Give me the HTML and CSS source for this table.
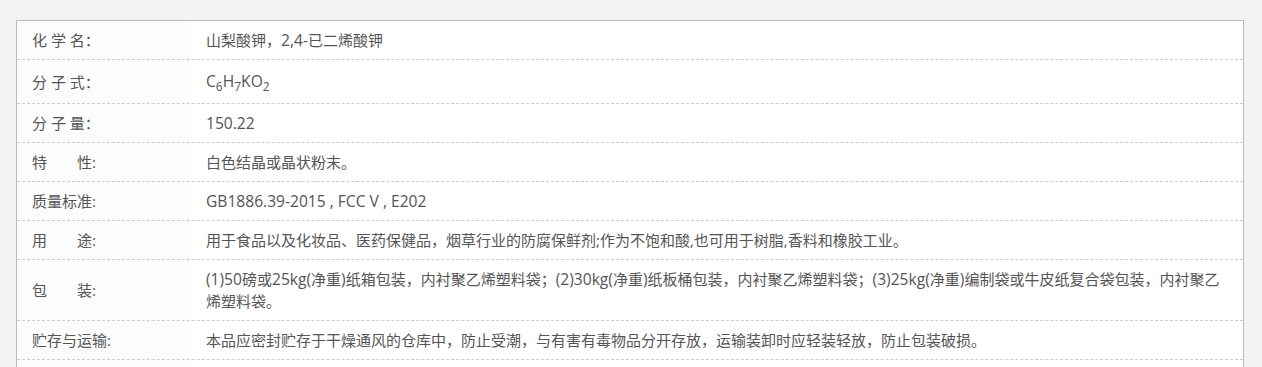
FILE: index.html
```html
<!DOCTYPE html>
<html lang="zh-CN">
<head>
<meta charset="utf-8">
<title>山梨酸钾</title>
<link rel="stylesheet" href="styles.css">
</head>
<body>
<div class="spec">
  <div class="row"><div class="label">化 学 名：</div><div class="value">山梨酸钾，<span class="en">2,4-</span>已二烯酸钾</div></div>
  <div class="row"><div class="label">分 子 式：</div><div class="value formula"><span class="en">C<sub>6</sub>H<sub>7</sub>KO<sub>2</sub></span></div></div>
  <div class="row"><div class="label">分 子 量：</div><div class="value"><span class="en">150.22</span></div></div>
  <div class="row"><div class="label">特　　性:</div><div class="value">白色结晶或晶状粉末。</div></div>
  <div class="row"><div class="label">质量标准:</div><div class="value"><span class="en">GB1886.39-2015 , FCC V , E202</span></div></div>
  <div class="row"><div class="label">用　　途:</div><div class="value">用于食品以及化妆品、医药保健品，烟草行业的防腐保鲜剂;作为不饱和酸,也可用于树脂,香料和橡胶工业。</div></div>
  <div class="row"><div class="label">包　　装:</div><div class="value"><span><span class="en">(1)50</span>磅或<span class="en">25kg(</span>净重<span class="en">)</span>纸箱包装，内衬聚乙烯塑料袋；<span class="en">(2)30kg(</span>净重<span class="en">)</span>纸板桶包装，内衬聚乙烯塑料袋；<span class="en">(3)25kg(</span>净重<span class="en">)</span>编制袋或牛皮纸复合袋包装，内衬聚乙烯塑料袋。</span></div></div>
  <div class="row"><div class="label">贮存与运输:</div><div class="value">本品应密封贮存于干燥通风的仓库中，防止受潮，与有害有毒物品分开存放，运输装卸时应轻装轻放，防止包装破损。</div></div>
  <div class="row"><div class="label"></div><div class="value"></div></div>
</div>
</body>
</html>
```
FILE: styles.css
```css
html, body {
  margin: 0;
  padding: 0;
  background: #f3f3f3;
}
body {
  padding: 20px 0 0 16px;
  font-family: "Open Sans", "Noto Sans CJK SC", sans-serif;
  font-size: 15px;
  color: #555;
}
.spec {
  width: 1226px;
  background: #fff;
  border: 1px solid #bbb;
  border-bottom: none;
}
.row {
  display: grid;
  grid-template-columns: 173px 1fr;
  border-bottom: 1px dashed #ccc;
}
.label {
  background: #fcfcfc;
  padding: 8px 0 8px 15px;
  line-height: 22px;
  display: flex;
  align-items: center;
  white-space: pre;
}
.value {
  padding: 8px 16px 8px 16px;
  line-height: 22px;
  display: flex;
  align-items: center;
}
.en {
  font-size: 15.6px;
}
.formula {
  display: block;
  padding-top: 10px;
  padding-bottom: 11px;
}
.formula sub {
  font-size: 12px;
  vertical-align: -4px;
  line-height: 0;
}
```
